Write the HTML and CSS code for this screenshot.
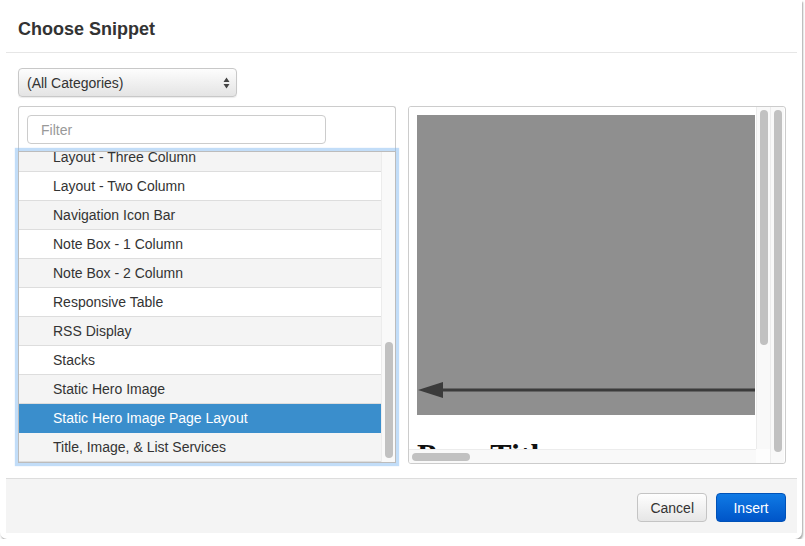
FILE: index.html
```html
<!DOCTYPE html>
<html lang="en">
<head>
    <meta charset="UTF-8">
    <title>Choose Snippet</title>
    <link rel="stylesheet" href="styles.css">
</head>
<body>
    <div class="modal">
        <div class="modal-header">
            <h3>Choose Snippet</h3>
        </div>

        <div class="modal-body">
            <div class="category-select">
                <span>(All Categories)</span>
                <svg class="select-arrows" width="7" height="12" viewBox="0 0 7 12">
                    <path d="M3.5 0.5 L6.5 5 L0.5 5 Z M3.5 11.5 L6.5 7 L0.5 7 Z" fill="#444"/>
                </svg>
            </div>

            <div class="panes">
                <div class="pane list-pane">
                    <input class="filter" type="text" placeholder="Filter">
                    <div class="snippet-list">
                        <div class="rows">
                            <div class="row odd">Layout - Three Column</div>
                            <div class="row">Layout - Two Column</div>
                            <div class="row odd">Navigation Icon Bar</div>
                            <div class="row">Note Box - 1 Column</div>
                            <div class="row odd">Note Box - 2 Column</div>
                            <div class="row">Responsive Table</div>
                            <div class="row odd">RSS Display</div>
                            <div class="row">Stacks</div>
                            <div class="row odd">Static Hero Image</div>
                            <div class="row selected">Static Hero Image Page Layout</div>
                            <div class="row odd">Title, Image, &amp; List Services</div>
                        </div>
                        <div class="vscroll list-scroll"><div class="thumb"></div></div>
                    </div>
                </div>

                <div class="pane preview-pane">
                    <div class="frame">
                        <div class="frame-main">
                            <div class="frame-view">
                                <div class="hero">
                                    <svg width="338" height="300" viewBox="0 0 338 300">
                                        <line x1="22" y1="275" x2="338" y2="275" stroke="#3b3b3b" stroke-width="3"/>
                                        <path d="M1 275 L26 267 L26 283 Z" fill="#3b3b3b"/>
                                    </svg>
                                </div>
                                <h1 class="page-title">Page Title</h1>
                            </div>
                            <div class="vscroll inner-scroll"><div class="thumb"></div></div>
                        </div>
                        <div class="hscroll">
                            <div class="hscroll-track"><div class="thumb"></div></div>
                            <div class="corner"></div>
                        </div>
                    </div>
                    <div class="vscroll outer-scroll"><div class="thumb"></div></div>
                </div>
            </div>
        </div>

        <div class="modal-footer">
            <button class="btn">Cancel</button>
            <button class="btn btn-primary">Insert</button>
        </div>
    </div>
</body>
</html>
```

FILE: styles.css
```css
body { margin: 0; background: #fff; font-family: "Liberation Sans", Helvetica, Arial, sans-serif; color: #333; }

.modal {
    width: 802px; height: 539px; box-sizing: border-box;
    background: #fff; border-radius: 0 0 7px 7px;
    box-shadow: 1px 2px 2px rgba(0,0,0,0.35);
    display: flex; flex-direction: column;
}

.modal-header { height: 53px; box-sizing: border-box; margin: 0 5px 0 6px; border-bottom: 1px solid #e6e6e6; display: flex; align-items: center; padding: 6px 0 0 12px; }
.modal-header h3 { margin: 0; font-size: 18px; font-weight: bold; color: #333; }

.modal-body { padding: 15px 0 0 18px; height: 425px; box-sizing: border-box; }

.category-select {
    width: 219px; height: 29px; box-sizing: border-box;
    border: 1px solid #c8c8c8; border-radius: 4px;
    background: linear-gradient(#fdfdfd, #e4e4e4);
    box-shadow: 0 1px 1px rgba(0,0,0,0.08);
    display: flex; align-items: center; justify-content: space-between;
    padding: 0 6px 0 8px; font-size: 14px; color: #333;
}

.panes { display: flex; gap: 12px; margin-top: 9px; }
.pane { width: 378px; height: 358px; box-sizing: border-box; border: 1px solid #ccc; border-radius: 3px; }

.list-pane { padding-top: 8px; border-bottom-color: transparent; }
.filter {
    display: block; margin-left: 8px; width: 299px; height: 29px; box-sizing: border-box;
    border: 1px solid #ccc; border-radius: 4px; padding: 0 13px;
    font: 14px "Liberation Sans", Helvetica, Arial, sans-serif; color: #333;
}
.filter::placeholder { color: #999; }

.snippet-list {
    margin: 7px -1px 0; height: 312px; box-sizing: border-box;
    border: 1px solid #bcbcbc; display: flex; overflow: hidden;
    box-shadow: 0 0 1px 3px rgba(120,180,240,0.45);
}
.rows { flex: 1; margin-top: -9px; }
.row { height: 28px; line-height: 28px; border-bottom: 1px solid #ddd; padding-left: 34px; font-size: 14px; color: #333; background: #fff; }
.row.odd { background: #f4f4f4; }
.row.selected { background: #3a8ecc; color: #fff; border-bottom-color: #3a8ecc; }

.vscroll { width: 14px; background: #f9f9f9; border-left: 1px solid #ececec; box-sizing: border-box; display: flex; flex-direction: column; align-items: center; }
.vscroll .thumb { width: 8px; background: #c1c1c1; border-radius: 4px; }
.list-scroll .thumb { margin-top: 190px; height: 116px; }

.preview-pane { display: flex; overflow: hidden; }
.frame { width: 361px; display: flex; flex-direction: column; }
.frame-main { flex: 1; display: flex; overflow: hidden; }
.frame-view { flex: 1; overflow: hidden; padding: 8px 0 0 8px; background: #fff; }
.hero { width: 338px; height: 300px; background: #8f8f8f; }
.hero svg { display: block; }
.page-title { margin: 24px 0 0; font: bold 32px/32px "Liberation Serif", "Times New Roman", serif; color: #111; white-space: nowrap; }
.inner-scroll .thumb { margin-top: 3px; height: 235px; }
.outer-scroll .thumb { margin-top: 3px; height: 342px; }

.hscroll { height: 14px; display: flex; }
.hscroll-track { flex: 1; background: #f9f9f9; border-top: 1px solid #ececec; box-sizing: border-box; padding: 3px 0 0 3px; }
.hscroll-track .thumb { width: 58px; height: 8px; border-radius: 4px; background: #c1c1c1; }
.corner { width: 14px; background: #fdfdfd; }

.modal-footer {
    margin: 0 5px 0 6px; height: 55px; box-sizing: border-box;
    border-top: 1px solid #ddd; background: #f4f4f4;
    display: flex; justify-content: flex-end; align-items: flex-start;
    gap: 9px; padding: 14px 11px 0 0;
}
.btn {
    height: 29px; padding: 0 12px; border-radius: 4px; border: 1px solid #c4c4c4;
    background: linear-gradient(#fefefe, #e6e6e6); color: #333;
    font: 14px "Liberation Sans", Helvetica, Arial, sans-serif; cursor: pointer;
}
.btn-primary { width: 70px; border-color: #0052b8; background: linear-gradient(#0f7ae5, #0055c8); color: #fff; }
```
